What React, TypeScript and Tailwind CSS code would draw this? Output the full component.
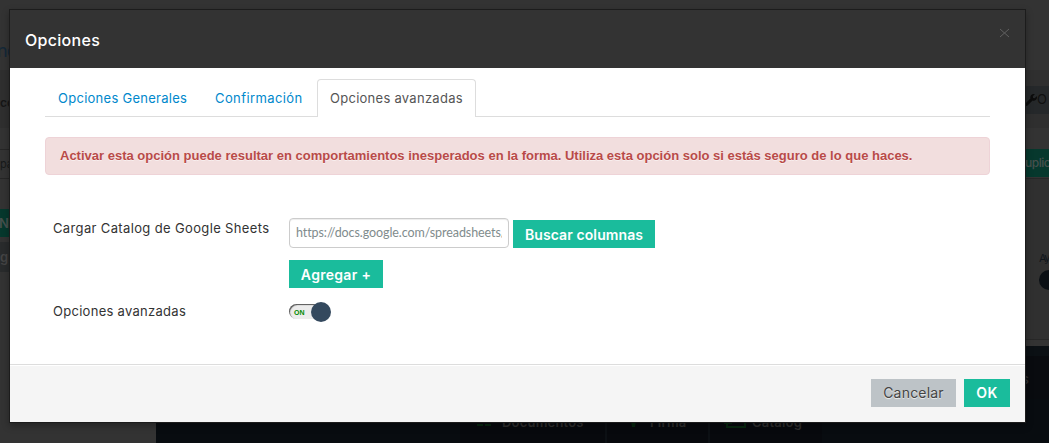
import React from "react";

function Wrench() {
  return (
    <svg viewBox="0 0 512 512" className="h-[12px] w-[12px] shrink-0" fill="#0c0c0c">
      <path d="M507.700 109.100c-2.200-9-13.500-12.100-20.100-5.500l-74.400 74.400-67.900-11.300L334 98.900l74.400-74.400c6.600-6.600 3.400-17.900-5.700-20.200-47.400-11.700-99.600.9-136.600 37.900-39.600 39.600-50.500 97.100-34.100 147.200L18.700 402.800c-25 25-25 65.500 0 90.500s65.500 25 90.500 0l213.200-213.200c50.100 16.700 107.500 5.700 147.400-34.200 37.100-37.100 49.700-89.300 37.900-136.800z" />
    </svg>
  );
}

function Backdrop() {
  return (
    <div className="flex h-full w-full flex-col overflow-hidden bg-[#333]">
      <div className="flex h-[346px] shrink-0 justify-between">
        <div className="flex w-[156px] flex-col">
          <div className="-ml-[3px] h-[70px] pt-[38px] text-[18px] leading-[26px] tracking-[-1px] text-[#142838]">ne</div>
          <div className="h-[58px] bg-[#2f2f2f] pt-[24px] text-[12px] font-semibold leading-[18px] text-[#161616]">co</div>
          <div className="mt-[21px] h-[30px] border-y border-[#262626] pt-[6px] text-[11px] leading-[16px] text-[#171a1a]">pá</div>
          <div className="-ml-[1px] mt-[30px] h-[28px] bg-[#06382d] pt-[5px] text-[13px] font-semibold leading-[18px] text-[#46504d]">No</div>
          <div className="mt-[5px] h-[30px] bg-[#292b2c] pt-[7px] text-[13px] font-semibold leading-[16px] text-[#454545]">g</div>
        </div>
        <div className="flex w-[24px] flex-col">
          <div className="mt-[70px] h-[58px] shrink-0 bg-[#2f2f2f] pt-[16px]">
            <div className="flex h-[28px] items-center bg-[#25282a] text-[13px] text-[#101010]">
              <Wrench />
              <span>O</span>
            </div>
          </div>
          <div className="mt-[21px] h-[28px] shrink-0 bg-[#06382d] pt-[5px] text-[12px] font-medium leading-[18px] tracking-[-0.5px] text-[#46504d]">uplic</div>
          <div className="mt-[1px] flex h-[162px] shrink-0 flex-col border-y border-[#272727] bg-[#303030] pl-[14px] pt-[71px]">
            <span className="text-[11px] leading-[16px] tracking-[-1.5px] text-[#11161c]">Ay</span>
            <span className="mt-[4px] h-[20px] w-[10px] shrink-0 rounded-l-full bg-[#0a0f14]" />
          </div>
        </div>
      </div>
      <div className="ml-[156px] flex grow flex-col bg-[#0b1014]">
        <div className="mt-[10px] flex h-[43px] shrink-0 items-center justify-end bg-[#090b0f] pr-[20px] pt-[4px] text-[13px] font-semibold text-[#2e2e2e]">s</div>
        <div className="flex h-[44px] shrink-0 bg-[#080c10] pl-[304px] text-[13px] font-semibold text-[#2e2e2e]">
          <div className="flex w-[145px] bg-[#07090d] pl-[17px] pt-[12px]">
            <svg className="h-[16px] w-[15px]" fill="#07270f"><path d="M0 3h6v2H0zM8 3h6v2H8zM0 8h6v2H0zM8 8h6v2H8zM0 13h6v2H0zM8 13h6v2H8z" /></svg>
            <span className="ml-[10px] leading-[22px] tracking-[0.2px]">Documentos</span>
          </div>
          <div className="flex w-[103px] border-l-2 border-[#0c1014] bg-[#07090d] pl-[22px] pt-[10px]">
            <svg className="h-[19px] w-[10px]" fill="#07270f"><path d="M0 0h9L6 18H3z" /></svg>
            <span className="ml-[11px] mt-[2px] leading-[22px] tracking-[0.2px]">Firma</span>
          </div>
          <div className="flex w-[114px] border-l-2 border-[#0c1014] bg-[#07090d] pl-[14px] pt-[10px]">
            <svg className="h-[20px] w-[23px]" fill="none" stroke="#07270f" strokeWidth="2"><path d="M3 2h18v16H3v-4M0 14h8" /></svg>
            <span className="ml-[5px] mt-[2px] leading-[22px] tracking-[0.2px]">Catalog</span>
          </div>
        </div>
      </div>
    </div>
  );
}

function Tabs() {
  return (
    <div className="flex h-[38px] items-end border-b border-[#ddd] text-[13px] leading-[18px] text-[#0088cc]">
      <a className="mb-[9px] ml-[13px] w-[157px] whitespace-nowrap tracking-[0.27px]">Opciones Generales</a>
      <a className="mb-[9px] w-[102px] whitespace-nowrap tracking-[0.4px]">Confirmación</a>
      <a className="-mb-px h-[38px] w-[159px] whitespace-nowrap rounded-t-[4px] border border-b-0 border-[#ddd] bg-white pl-[12px] pt-[9px] tracking-[0.27px] text-[#555]">Opciones avanzadas</a>
    </div>
  );
}

function Switch() {
  return (
    <div className="flex h-[20px] w-[42px] items-center">
      <div className="mt-[-1px] h-[15px] w-[32px] rounded-full bg-[#ececec] pl-[5px] pt-[2px] font-['Liberation_Sans',sans-serif] text-[7px] font-bold leading-[14px] text-[#008a00] shadow-[inset_1px_1px_1px_#555]">ON</div>
      <div className="-ml-[10px] h-[20px] w-[20px] shrink-0 rounded-full bg-[#34495e]" />
    </div>
  );
}

export default function App() {
  return (
    <div className="relative h-[443px] w-[1049px] overflow-hidden font-[Inter,sans-serif]">
      <Backdrop />
      <div className="absolute left-[9px] top-[9px] flex h-[414px] w-[1017px] flex-col border border-[#1c1c1c] bg-white shadow-[0_3px_7px_rgba(0,0,0,0.3)]">
        <header className="flex h-[58px] shrink-0 justify-between bg-[#333] pl-[15px] pr-[15px]">
          <h3 className="pt-[20px] text-[16px] font-medium leading-[20px] tracking-[0.3px] text-white">Opciones</h3>
          <svg className="mt-[18px] h-[11px] w-[11px]" viewBox="0 0 11 11" fill="none" stroke="#606060"><path d="M1 1l9 8M10 1L1 9" /></svg>
        </header>
        <main className="flex h-[296px] shrink-0 flex-col px-[35px] pt-[11px]">
          <Tabs />
          <div className="mt-[20px] h-[38px] shrink-0 whitespace-nowrap rounded-[4px] border border-[#eed3d7] bg-[#f2dede] pl-[14px] pt-[8px] font-['Liberation_Sans',sans-serif] text-[13px] font-bold leading-[20px] text-[#b94a48] [text-shadow:0_1px_0_rgba(255,255,255,0.5)]">
            Activar esta opción puede resultar en comportamientos inesperados en la forma. Utiliza esta opción solo si estás seguro de lo que haces.
          </div>
          <div className="mt-[43px] flex pl-[8px] text-[13px] text-[#333]">
            <label className="w-[236px] whitespace-nowrap pt-[1px] leading-[18px] tracking-[0.36px]">Cargar Catalog de Google Sheets</label>
            <div className="flex flex-col">
              <div className="flex items-start">
                <div className="h-[30px] w-[220px] rounded-[4px] border border-[#ccc] px-[6px] pt-[5px] font-[Lato,sans-serif] text-[12.5px] leading-[18px] tracking-[-0.08px] text-[#7f8c8d] shadow-[inset_0_1px_1px_rgba(0,0,0,0.075)]">
                  <div className="overflow-hidden whitespace-nowrap">https://docs.google.com/spreadsheets/</div>
                </div>
                <button className="ml-[4px] mt-[2px] h-[28px] w-[142px] whitespace-nowrap bg-[#1abc9c] text-[14px] font-semibold tracking-[0.1px] text-white">Buscar columnas</button>
              </div>
              <button className="mt-[12px] h-[28px] w-[94px] whitespace-nowrap bg-[#1abc9c] text-[14px] font-semibold tracking-[0.3px] text-white">Agregar +</button>
            </div>
          </div>
          <div className="mt-[14px] flex pl-[8px] text-[13px] text-[#333]">
            <label className="w-[236px] whitespace-nowrap leading-[18px] tracking-[0.28px]">Opciones avanzadas</label>
            <Switch />
          </div>
        </main>
        <footer className="flex grow justify-end gap-[8px] border-t border-[#ddd] bg-[#f5f5f5] pr-[15px] pt-[14px] shadow-[inset_0_1px_0_#fff]">
          <button className="h-[28px] w-[85px] bg-[#bdc3c7] pb-px text-[14px] tracking-[0.2px] text-[#444] [text-shadow:0_1px_1px_rgba(255,255,255,0.75)]">Cancelar</button>
          <button className="h-[28px] w-[46px] bg-[#1abc9c] pb-px text-[14px] font-semibold tracking-[0.5px] text-white">OK</button>
        </footer>
      </div>
    </div>
  );
}
